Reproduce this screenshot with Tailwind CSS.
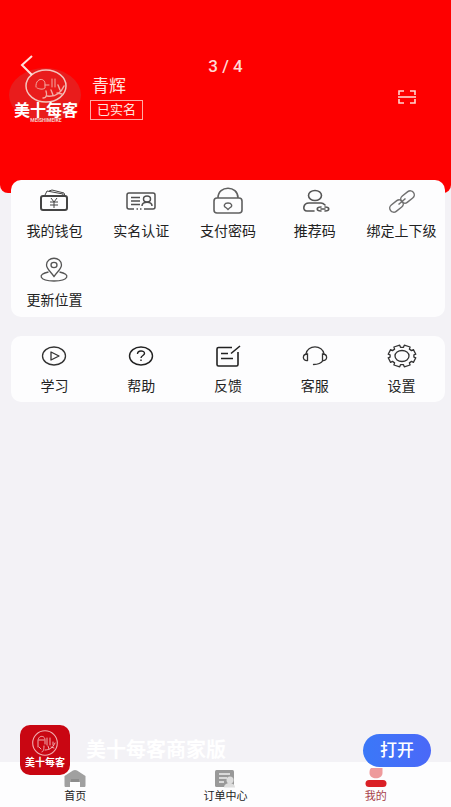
<!DOCTYPE html>
<html lang="zh-CN">

<head>
    <meta charset="UTF-8">
    <meta name="viewport" content="width=device-width, initial-scale=1.0">
    <title>我的</title>
    <script src="https://cdn.jsdelivr.net/npm/@tailwindcss/browser@4"></script>
</head>

<body class="relative min-h-screen flex flex-col bg-[#f3f2f6] text-[#222] font-['Roboto','Noto_Sans_CJK_SC',sans-serif]">

    <!-- Header with the profile -->
    <header class="bg-[#fe0000] rounded-b-lg pt-17 pb-[71px] pl-[9px] pr-[34px] flex items-start">
        <svg class="w-[73px] h-[54px] shrink-0" viewBox="0 0 73 54" role="img" aria-label="美十每客">
            <ellipse cx="36" cy="27" rx="36" ry="27" fill="#e91c1c" />
            <ellipse cx="37" cy="18" rx="20" ry="16" fill="none" stroke="#f5c4bd" stroke-width="1.500" />
            <g fill="none" stroke="#f3aaa3" stroke-linecap="round">
                <path d="M27 19c-1-9 9-10 9-3v4c-2 2-6 1-8 0M36 17h4M43 11v8M46 11v8" />
                <path d="M34 30c4 0 4-4 3-7M38 28c8 1 14-3 17-10M44 27l-2-5M48 25l5 1M51 22l-2-5" stroke-width="1.400" />
            </g>
            <text x="37" y="48" text-anchor="middle" font-size="16" font-weight="700" fill="#fff">美十每客</text>
            <text x="37" y="54" text-anchor="middle" font-size="5" font-weight="700" fill="#f7c9c4">MEISHIMEIKE</text>
        </svg>
        <div class="ml-2 pt-[6px] flex flex-col items-start gap-[2px]">
            <h1 class="pl-[2px] text-[17px] leading-6 text-[#ffe3df]">青辉</h1>
            <span class="border border-[#ffaaa4] px-[6px] text-[13px] leading-[18px] text-[#ffe3df]">已实名</span>
        </div>
        <button type="button" aria-label="扫一扫" class="ml-auto mt-[21px]">
            <svg class="w-5 h-4 block" viewBox="0 0 20 16" fill="none" stroke="#ffd6cf" stroke-width="1.600">
                <path d="M2 6V2h5M13 2h5v4M18 10v4h-5M7 14H2v-4" />
                <path d="M1 8h18" />
            </svg>
        </button>
    </header>

    <!-- Viewer bar over the header -->
    <div class="absolute inset-x-0 top-[54px] h-6 flex items-center justify-center">
        <button type="button" aria-label="返回" class="absolute left-5">
            <svg class="w-4 h-6 block" viewBox="0 0 16 24" fill="none" stroke="#ffe0db" stroke-width="2">
                <path d="M12 2L2 11l10 10" />
            </svg>
        </button>
        <span class="text-[17px] leading-6 font-medium text-[#ffd9d4]">3 / 4</span>
    </div>

    <main class="grow pl-[11px] pr-[6px]">
        <!-- Account -->
        <nav class="relative -mt-[13px] bg-[#fdfdfe] rounded-[10px] py-[7px] grid grid-cols-5 gap-y-[15px] text-sm leading-5 whitespace-nowrap">
            <a href="#" class="flex flex-col items-center gap-[6px]">
                <svg class="w-8 h-7" viewBox="0 0 32 28" fill="none" stroke="#444" stroke-width="2" stroke-linejoin="round">
                    <rect x="3" y="9" width="26" height="14" rx="2" />
                    <path d="M7 8l2-4 16 3v2M11 4l3-1 12 3 1 3" stroke-width="1" />
                    <path d="M13 11l3 4 3-4M12 15h8M12 18h8M16 15v6" stroke-width="1" />
                </svg>
                <span>我的钱包</span>
            </a>
            <a href="#" class="flex flex-col items-center gap-[6px]">
                <svg class="w-8 h-7" viewBox="0 0 32 28" fill="none" stroke="#505050" stroke-width="1.500">
                    <path d="M9 22H4c-1 0-2-1-2-2V8c0-1 1-2 2-2h24c1 0 2 1 2 2v12c0 1-1 2-2 2h-9M11.500 22H13M15 22h1.500" />
                    <path d="M6 10.500h9M6 14h9M6 17.500h9" />
                    <ellipse cx="22" cy="12" rx="3.500" ry="3" />
                    <path d="M17 19c0-5 10-5 10 0" />
                </svg>
                <span>实名认证</span>
            </a>
            <a href="#" class="flex flex-col items-center gap-[6px]">
                <svg class="w-8 h-7" viewBox="0 0 32 28" fill="none" stroke="#606060" stroke-width="1.600">
                    <rect x="2" y="11" width="28" height="15" rx="3" />
                    <path d="M6 11C6-2 26-2 26 11" />
                    <path d="M14.500 21c-4-2-2-5 1.500-5s5.500 3 1.500 5L16 22.500z" stroke-width="1.300" />
                </svg>
                <span>支付密码</span>
            </a>
            <a href="#" class="flex flex-col items-center gap-[6px]">
                <svg class="w-8 h-7" viewBox="0 0 32 28" fill="none" stroke="#555" stroke-width="1.600" stroke-linecap="round">
                    <ellipse cx="16" cy="8.500" rx="6.500" ry="5" />
                    <path d="M15 24H8c-5 0-4-8 2-8h12c2 0 3 1 4 2" />
                    <path d="M22 24c-5 0-5-4 0-4M26 20c5 0 5 4 0 4M22 22h4" />
                </svg>
                <span>推荐码</span>
            </a>
            <a href="#" class="flex flex-col items-center gap-[6px]">
                <svg class="w-8 h-7" viewBox="0 0 32 28" fill="none" stroke="#707070" stroke-width="1.500">
                    <rect x="14" y="6" width="15" height="8" rx="4" transform="rotate(-38 21.500 10)" />
                    <rect x="3" y="15" width="15" height="8" rx="4" transform="rotate(-38 10.500 19)" />
                    <path d="M12.500 17.500l7-6" />
                </svg>
                <span>绑定上下级</span>
            </a>
            <a href="#" class="flex flex-col items-center gap-[6px]">
                <svg class="w-8 h-7" viewBox="0 0 32 28" fill="none" stroke="#555" stroke-width="1.300">
                    <path d="M16 20.500C12 15 8.500 12.500 8.500 9c0-9 15-9 15 0 0 3.500-3.500 6-7.500 11.500z" />
                    <ellipse cx="16" cy="9" rx="3" ry="2.600" />
                    <path d="M10.500 16C-1 18 1 25 16 25s17-7 5.500-9" />
                </svg>
                <span>更新位置</span>
            </a>
        </nav>

        <!-- Help and settings -->
        <nav class="mt-[19px] bg-[#fdfdfe] rounded-[10px] py-[6px] grid grid-cols-5 text-sm leading-5 whitespace-nowrap">
            <a href="#" class="flex flex-col items-center gap-[6px]">
                <svg class="w-8 h-7" viewBox="0 0 32 28" fill="none" stroke="#333" stroke-width="1.300" stroke-linejoin="round">
                    <ellipse cx="16" cy="14" rx="11.500" ry="9" />
                    <path d="M13 10v8l8-4z" />
                </svg>
                <span>学习</span>
            </a>
            <a href="#" class="flex flex-col items-center gap-[6px]">
                <svg class="w-8 h-7" viewBox="0 0 32 28" fill="none" stroke="#222" stroke-width="1.400">
                    <ellipse cx="16" cy="14" rx="11.500" ry="9" />
                    <path d="M12.500 12c0-4 7-4 7-.5 0 2-3.500 2-3.500 4.500M16 17.500V19" />
                </svg>
                <span>帮助</span>
            </a>
            <a href="#" class="flex flex-col items-center gap-[6px]">
                <svg class="w-8 h-7" viewBox="0 0 32 28" fill="none" stroke="#222" stroke-width="1.600">
                    <path d="M20 5.500H6.500c-1 0-1.500.5-1.500 1.500v15.500c0 1 .5 1.500 1.500 1.500h18c1 0 1.500-.5 1.500-1.500V10M28 4l-9 7.500M9 11.500h7M9 16.500h12" />
                </svg>
                <span>反馈</span>
            </a>
            <a href="#" class="flex flex-col items-center gap-[6px]">
                <svg class="w-8 h-7" viewBox="0 0 32 28" fill="none" stroke="#333" stroke-width="1.300" stroke-linecap="round">
                    <path d="M7 12C8 2.500 24 2.500 25 12" />
                    <path d="M8.500 12v6.500C3 19 3 12 8.500 12zM23.500 12v6.500C29 19 29 12 23.500 12z" />
                    <path d="M24 18.500c-2 3-5 4-9.500 4" />
                </svg>
                <span>客服</span>
            </a>
            <a href="#" class="flex flex-col items-center gap-[6px]">
                <svg class="w-8 h-7" viewBox="0 0 32 28" fill="none" stroke="#333" stroke-width="1.300" stroke-linejoin="round">
                    <path d="M27.900 15.100L29.800 15.800 27.400 20.400 25.500 19.400 23.400 20.900 24.100 23 18.300 24.800 17.500 22.700 14.500 22.700 13.700 24.800 7.900 23 8.600 20.900 6.500 19.400 4.600 20.400 2.200 15.800 4.100 15.100 4.100 12.900 2.200 12.200 4.600 7.600 6.500 8.600 8.600 7.100 7.900 5 13.700 3.200 14.500 5.300 17.500 5.300 18.300 3.200 24.100 5 23.400 7.100 25.500 8.600 27.400 7.600 29.800 12.200 27.900 12.900z" />
                    <ellipse cx="16" cy="14" rx="7" ry="5.500" />
                </svg>
                <span>设置</span>
            </a>
        </nav>
    </main>

    <!-- Tab bar -->
    <footer class="bg-[#fdfdfe] h-[45px] pt-[6px] grid grid-cols-3 text-[11px] leading-3">
        <a href="#" class="flex flex-col items-center gap-[3px]">
            <svg class="w-6 h-5" viewBox="0 0 24 20" fill="#a0a0a0">
                <path d="M1.500 8L10 2.500c1-.7 3-.7 4 0L22.500 8v9.500c0 1-.5 1.500-1.500 1.500h-4v-5H7v5H3c-1 0-1.500-.5-1.500-1.500z" />
                <path d="M8 11h8v3H8z" fill="#8c8c8c" />
            </svg>
            <span>首页</span>
        </a>
        <a href="#" class="flex flex-col items-center gap-[3px]">
            <svg class="w-6 h-5" viewBox="0 0 24 20">
                <rect x="2" y="2" width="19" height="17" rx="1.500" fill="#999" />
                <path d="M6 6h11M6 10h8M6 14h5" stroke="#eee" stroke-width="1.300" />
                <circle cx="17" cy="12" r="3.500" fill="#ddd" />
                <path d="M11 19.500c0-6 11-6 11 0z" fill="#ddd" />
            </svg>
            <span>订单中心</span>
        </a>
        <a href="#" class="flex flex-col items-center gap-[3px] text-[#a8424a]">
            <svg class="w-6 h-5" viewBox="0 0 24 20">
                <path d="M12 0h6.500v5c0 7-13 7-13 0S9 0 12 0z" fill="#ee9a9c" />
                <rect x="1.500" y="12" width="21" height="7" rx="3.500" fill="#da2026" />
            </svg>
            <span>我的</span>
        </a>
    </footer>

    <!-- App banner floating over the tab bar -->
    <aside class="absolute left-5 right-5 bottom-8 flex items-center">
        <svg class="w-[50px] h-[50px] shrink-0" viewBox="0 0 50 50" role="img" aria-label="美十每客">
            <rect width="50" height="50" rx="10" fill="#c90612" />
            <circle cx="25" cy="18" r="12.300" fill="none" stroke="#f0aeb0" stroke-width="1.100" />
            <g fill="none" stroke="#f0aeb0" stroke-linecap="round">
                <path d="M18 22v-6c0-6 7-6 7-1v4M19 15h5M19 22l2 2M27 13v7M30 13v7M24 21c0 4-1 6-2 6" />
                <path d="M25 25c4 0 8-2 10-7M29 24l-1-3M31 22l3 1M33 20v-3" />
            </g>
            <text x="25" y="41" text-anchor="middle" font-size="10" font-weight="700" fill="#fff">美十每客</text>
        </svg>
        <strong class="ml-4 text-xl font-bold text-white">美十每客商家版</strong>
        <button type="button" class="ml-auto w-[68px] h-[33px] rounded-full bg-linear-to-r from-[#3a78f8] to-[#4a68f8] text-[17px] leading-6 font-medium text-white">打开</button>
    </aside>

</body>

</html>
